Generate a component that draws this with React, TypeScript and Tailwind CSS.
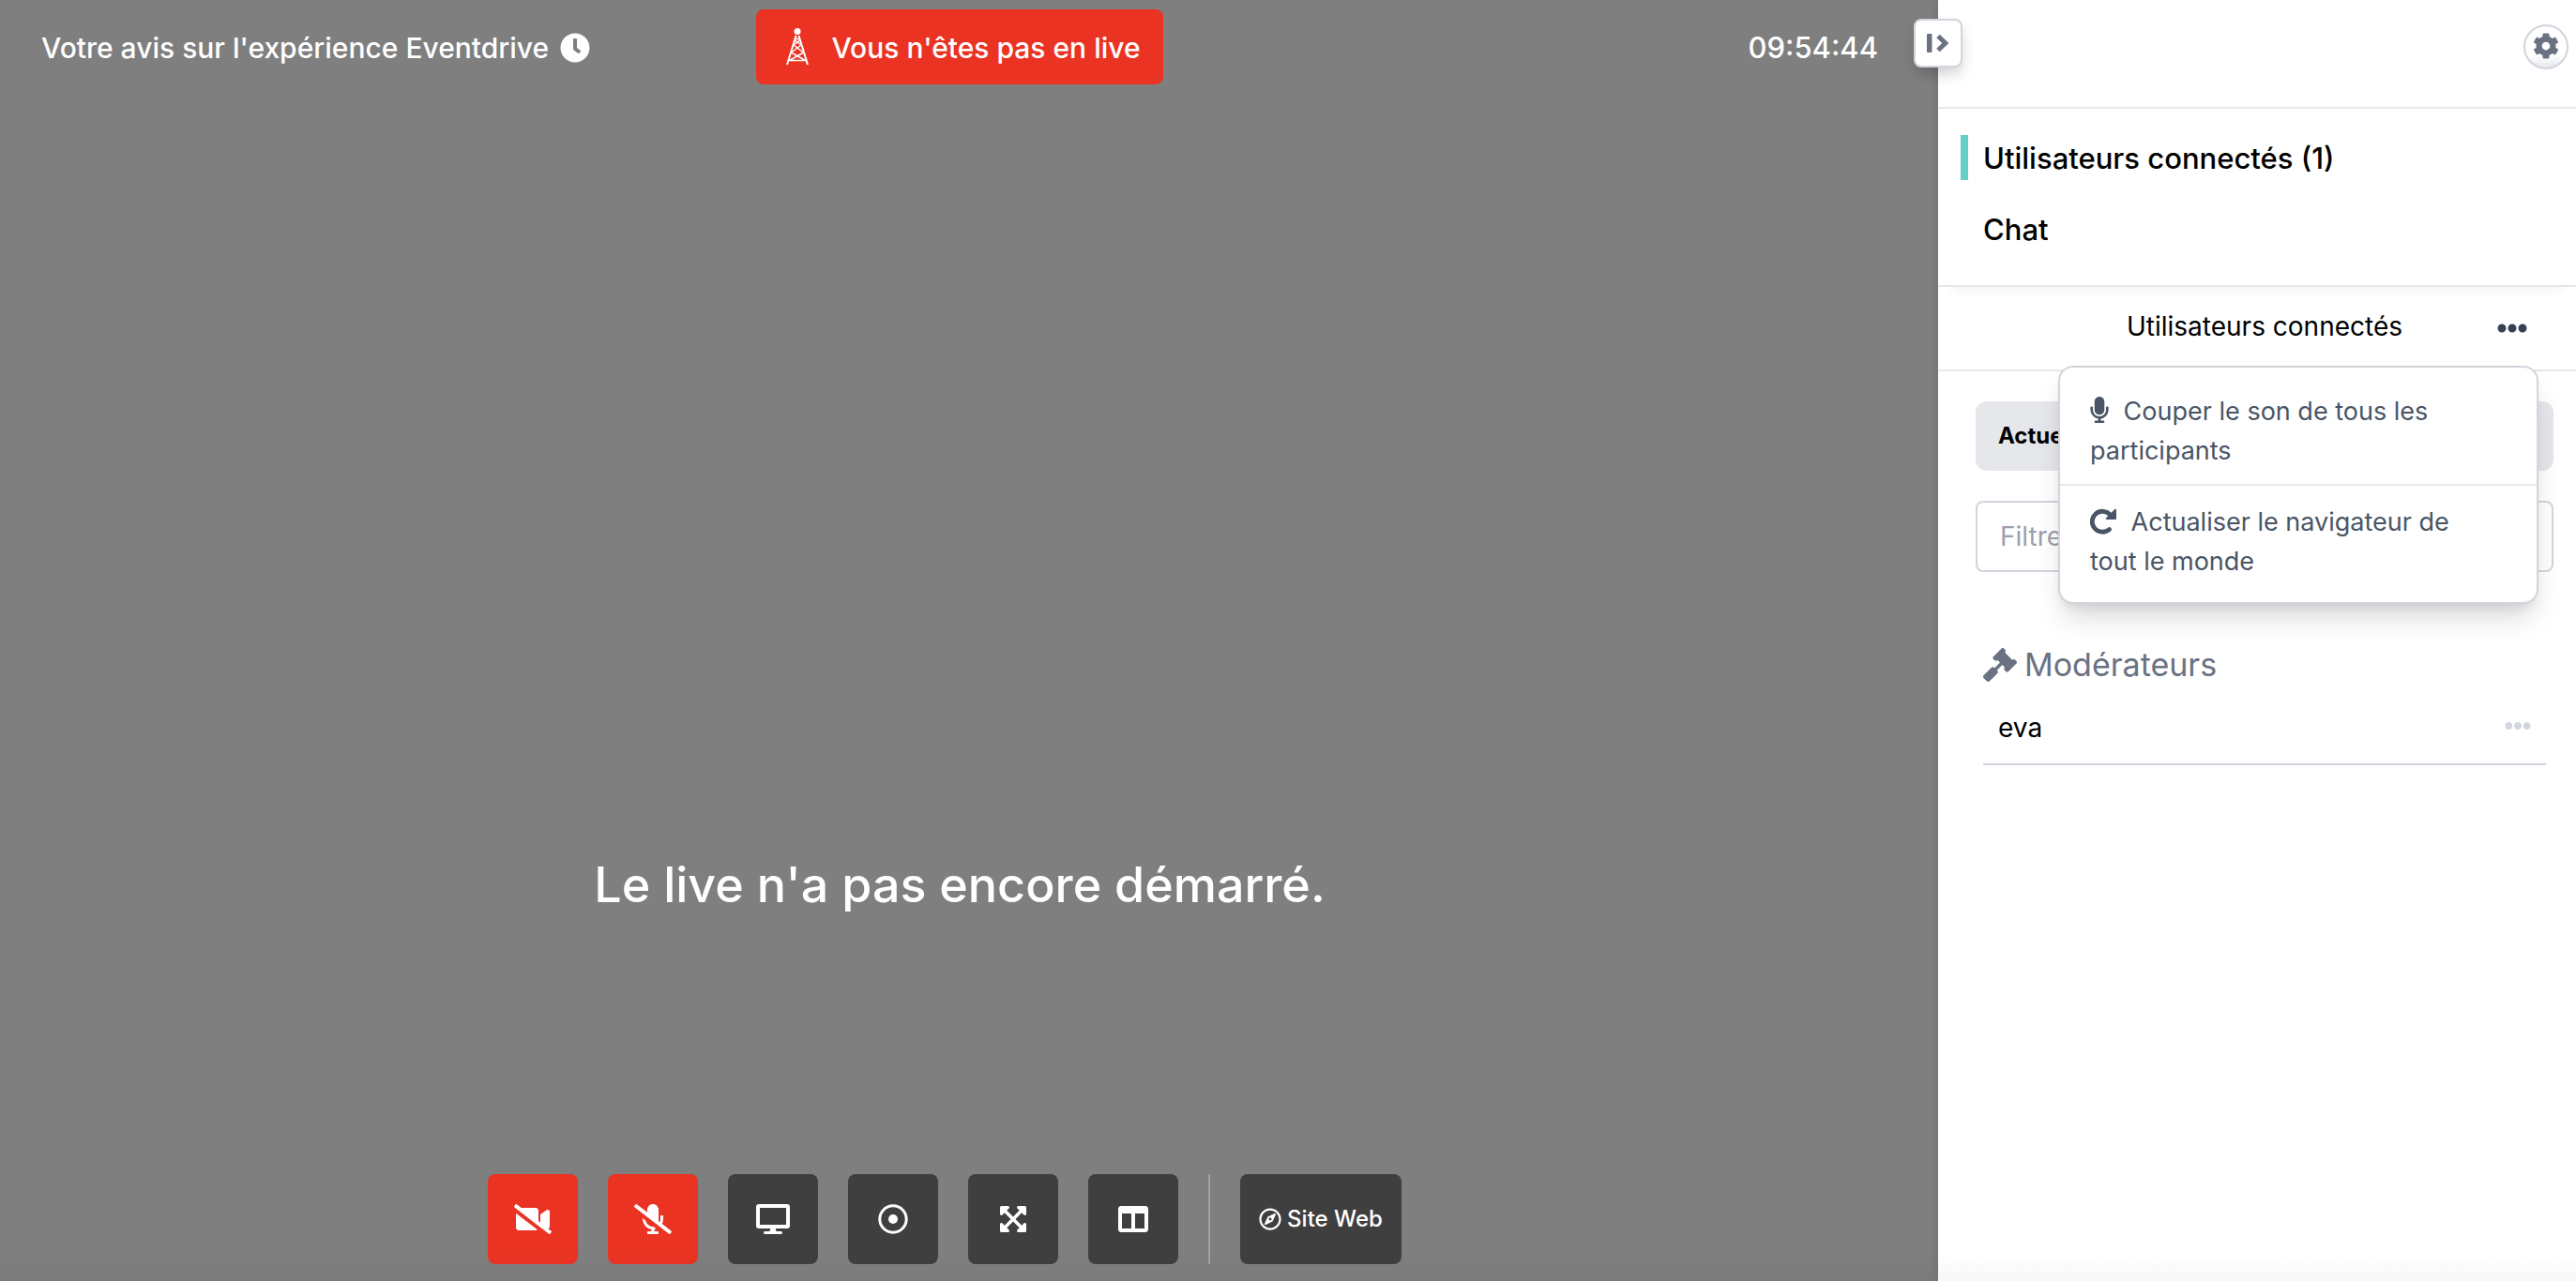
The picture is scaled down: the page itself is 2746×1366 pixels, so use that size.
import { useState } from 'react'
import type { ReactNode } from 'react'
import {
  FaClock,
  FaCog,
  FaColumns,
  FaEllipsisH,
  FaExpandArrowsAlt,
  FaGavel,
  FaMicrophone,
  FaMicrophoneSlash,
  FaRegCompass,
  FaVideoSlash
} from 'react-icons/fa'

function TowerIcon() {
  return (
    <svg viewBox="0 0 24 40" className="h-10 w-6" fill="none" stroke="currentColor" strokeWidth="2" aria-hidden="true">
      <circle cx="12" cy="3.5" r="3.500" fill="currentColor" stroke="none" />
      <path d="M10.500 8 1 39M13.500 8 23 39" />
      <path d="M2.500 34.500h19M9.500 11.500h5M8 18l6.500-5M16 18l-6.500-5M8 18l10.500 8M16 18L5.500 26M5.500 26l15 8.500M18.500 26l-15 8.500" strokeWidth="1.500" />
    </svg>
  )
}

function ScreenIcon() {
  return (
    <svg viewBox="0 0 36 32" className="h-8 w-9" fill="none" stroke="currentColor" aria-hidden="true">
      <rect x="2" y="2" width="32" height="22" rx="1" strokeWidth="4" />
      <path d="M15.500 25h5l1 4h-7z" fill="currentColor" stroke="none" />
      <path d="M9.500 30.500h17" strokeWidth="3" strokeLinecap="round" />
    </svg>
  )
}

function RecordIcon() {
  return (
    <svg viewBox="0 0 32 32" className="size-8" fill="none" aria-hidden="true">
      <circle cx="16" cy="16" r="14.200" stroke="currentColor" strokeWidth="3" />
      <circle cx="16" cy="16" r="5" fill="currentColor" />
    </svg>
  )
}

function CollapseIcon() {
  return (
    <svg viewBox="0 0 24 20" className="h-5 w-6" fill="none" aria-hidden="true">
      <rect x="0" y="0" width="5.500" height="20" rx="1" fill="currentColor" />
      <path d="M12 2.500 19.800 10 12 17.500" stroke="currentColor" strokeWidth="5" />
    </svg>
  )
}

function ReloadIcon() {
  return (
    <svg viewBox="0 0 28 28" className="-mt-1.5 mr-2 inline size-7" fill="none" aria-hidden="true">
      <path d="M20.500 22.500A11 11 0 1 1 21.500 7" stroke="currentColor" strokeWidth="4.800" strokeLinecap="round" />
      <path d="M28 1.800v9.200a1 1 0 0 1-1 1h-9.200c-1 0-1.300-1-.7-1.700l9.200-9.200c.7-.6 1.700-.3 1.700.7z" fill="currentColor" />
    </svg>
  )
}

const controls = [
  { label: 'Activer la caméra', icon: <FaVideoSlash className="size-10" />, off: true },
  { label: 'Activer le micro', icon: <FaMicrophoneSlash className="size-10" />, off: true },
  { label: "Partager l'écran", icon: <ScreenIcon />, off: false },
  { label: 'Enregistrer', icon: <RecordIcon />, off: false },
  { label: 'Plein écran', icon: <FaExpandArrowsAlt className="size-8" />, off: false },
  { label: 'Disposition', icon: <FaColumns className="size-8" />, off: false }
]

function MenuItem({ children }: { children: ReactNode }) {
  return (
    <button type="button" className="block w-full pt-[18px] pr-16 pb-3.5 pl-8 text-left text-[27px] leading-[42px] text-gray-600">
      {children}
    </button>
  )
}

export default function App() {
  const [menuOpen, setMenuOpen] = useState(true)

  return (
    <div className="relative flex min-h-screen bg-white font-['Inter',sans-serif] text-black">
      <main className="flex min-w-0 flex-1 flex-col bg-[#7f7f7f] pt-2.5 pr-16 pb-[18px] pl-11 text-white">
        <header className="grid grid-cols-[1fr_auto_1fr] items-center text-[30px] font-medium">
          <h1 className="flex items-center gap-3 pt-0.5">
            Votre avis sur l'expérience Eventdrive
            <FaClock className="size-8" />
          </h1>
          <button type="button" className="flex h-20 items-center gap-6 rounded-lg bg-[#ea3323] pr-6 pl-8">
            <TowerIcon />
            <span className="pt-0.5">Vous n'êtes pas en live</span>
          </button>
          <time className="pt-0.5 text-right text-[31px]">09:54:44</time>
        </header>

        <p className="mt-auto text-center text-[52px] leading-[72px] font-medium">Le live n'a pas encore démarré.</p>

        <div className="mt-[272px] flex justify-center">
          {controls.map((control) => (
            <button
              key={control.label}
              type="button"
              aria-label={control.label}
              className={`mr-8 flex size-24 items-center justify-center rounded-lg ${control.off ? 'bg-[#ea3323]' : 'bg-[#3f3f3f]'}`}
            >
              {control.icon}
            </button>
          ))}
          <div className="mr-8 w-0.5 bg-[#a0a0a0]" />
          <a href="#site" className="mr-8 flex h-24 items-center gap-1.5 rounded-lg bg-[#3f3f3f] px-5 text-2xl font-medium">
            <FaRegCompass className="size-6" />
            Site Web
          </a>
        </div>
      </main>

      <aside className="relative w-[680px] shrink-0 shadow-[0_0_12px_rgba(0,0,0,0.15)]">
        <button
          type="button"
          aria-label="Réduire le panneau"
          className="absolute top-5 -left-[26px] flex size-[52px] items-center justify-center rounded-lg border-2 border-gray-300 bg-white text-gray-500 shadow-[0_8px_16px_-2px_rgba(0,0,0,0.2)]"
        >
          <CollapseIcon />
        </button>

        <div className="flex h-[116px] items-start justify-end border-b-2 border-gray-200 pt-[26px] pr-2">
          <button
            type="button"
            aria-label="Paramètres"
            className="flex size-12 items-center justify-center rounded-full border-2 border-gray-300 bg-linear-to-b from-white from-70% to-gray-200 pb-0.5 text-gray-500"
          >
            <FaCog className="size-7" />
          </button>
        </div>

        <nav className="flex flex-col gap-7 border-b-2 border-gray-200 px-6 pt-7 pb-9 text-[31px] leading-[46px] font-medium shadow-[0_20px_12px_-16px_rgba(0,0,0,0.05)]">
          <a href="#utilisateurs" className="border-l-8 border-[#65cec7] pt-0.5 pl-4">
            Utilisateurs connectés (1)
          </a>
          <a href="#chat" className="border-l-8 border-transparent pt-0.5 pl-4">
            Chat
          </a>
        </nav>

        <div className="relative border-b-2 border-gray-200 pt-5 pb-6 text-[28px]">
          <h2 className="pl-4 text-center leading-[44px]">Utilisateurs connectés</h2>
          <button
            type="button"
            aria-label="Options"
            aria-expanded={menuOpen}
            onClick={() => setMenuOpen(!menuOpen)}
            className="absolute top-7 right-[52px] text-gray-700"
          >
            <FaEllipsisH className="size-8" />
          </button>

          {menuOpen && (
            <div className="absolute top-[84px] right-10 z-10 w-[512px] divide-y-2 divide-gray-200 rounded-2xl border-2 border-gray-300 bg-white py-2 shadow-[0_20px_30px_-6px_rgba(0,0,0,0.15),0_8px_12px_-4px_rgba(0,0,0,0.08)]">
              <MenuItem>
                <FaMicrophone className="-mt-2 mr-2 inline h-7 w-5" /> Couper le son de tous les participants
              </MenuItem>
              <MenuItem>
                <ReloadIcon /> Actualiser le navigateur de tout le monde
              </MenuItem>
            </div>
          )}
        </div>

        <div className="flex flex-col gap-8 pt-8 pr-6 pl-10">
          <select
            aria-label="Statut"
            className="h-[74px] w-full appearance-none rounded-xl bg-gray-200 px-6 text-2xl font-bold"
          >
            <option>Actuellement connectés</option>
          </select>
          <input
            type="text"
            aria-label="Filtrer"
            placeholder="Filtrer"
            className="h-[76px] w-full rounded-lg border-2 border-gray-300 px-6 text-[28px] placeholder:text-gray-400"
          />
        </div>

        <section className="mt-[72px] pr-8 pl-12">
          <h3 className="flex items-center gap-2 text-[34px] leading-[54px] text-gray-500">
            <FaGavel className="size-9" />
            Modérateurs
          </h3>
          <ul>
            <li className="flex items-start justify-between border-b-2 border-gray-300 px-4 pt-4 pb-3.5 text-[28px] leading-[48px]">
              eva
              <button type="button" aria-label="Options de eva" className="pt-2 text-gray-300">
                <FaEllipsisH className="size-7" />
              </button>
            </li>
          </ul>
        </section>
      </aside>

      <div className="pointer-events-none absolute inset-x-0 bottom-0 h-8 bg-linear-to-t from-black/3 to-transparent" />
    </div>
  )
}
